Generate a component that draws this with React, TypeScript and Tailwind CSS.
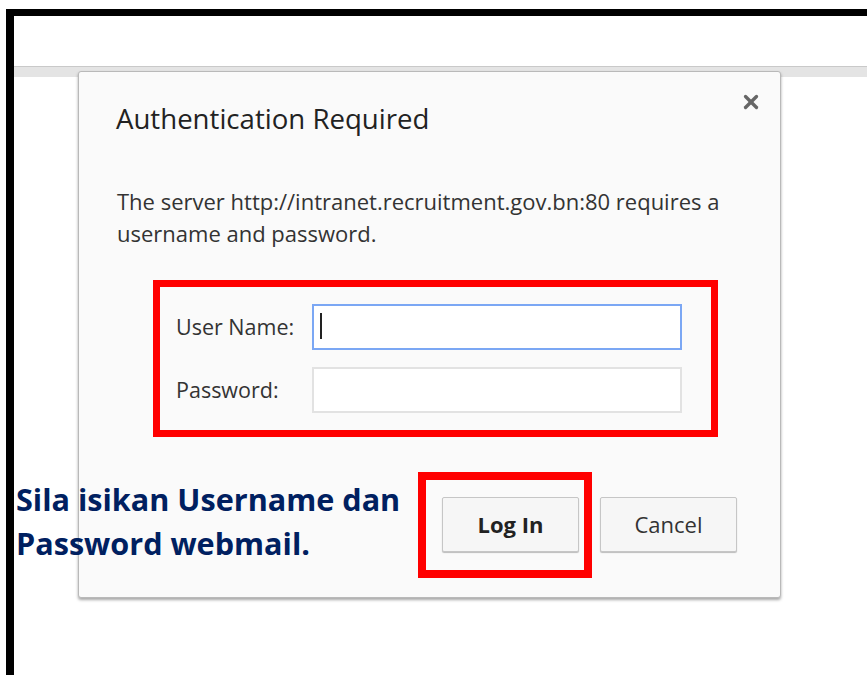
import { X } from "lucide-react";

const ui = { fontFamily: '"Open Sans", "Noto Sans", sans-serif' };

function Field({ label, focused }: { label: string; focused?: boolean }) {
  return (
    <div className="flex items-center">
      <span className="w-[136px] text-[21.5px] text-[#333]">{label}</span>
      <div
        className={`relative h-[46px] w-[370px] bg-white ${
          focused ? "border-2 border-[#7ba7f4]" : "border-2 border-[#e2e2e2]"
        }`}
      >
        {focused && <div className="absolute left-[6px] top-[7px] h-[26px] w-[2px] bg-[#222]" />}
      </div>
    </div>
  );
}

function AuthDialog() {
  return (
    <div
      className="absolute left-[78px] top-[71px] h-[527px] w-[703px] rounded-[3px] border border-[#b9b9b9] bg-[#fafafa] shadow-[0_2px_3px_rgba(0,0,0,0.35)]"
      style={ui}
    >
      <div className="flex items-start justify-between pl-[37px] pr-[18px] pt-[28px]">
        <h1 className="text-[27.6px] leading-[36px] text-[#222]">Authentication Required</h1>
        <X className="mt-[-9px] h-[22px] w-[22px] text-[#666]" strokeWidth={3.6} />
      </div>
      <p className="mt-[49px] w-[660px] pl-[38px] text-[22px] leading-[32px] text-[#333]">
        The server http://intranet.recruitment.gov.bn:80 requires a username and password.
      </p>

      <div className="ml-[74px] mt-[31px] flex w-[565px] flex-col gap-[17px] border-[7px] border-[#ff0000] pb-[17px] pl-[16px] pt-[17px]">
        <Field label="User Name:" focused />
        <Field label="Password:" />
      </div>

      <div className="ml-[339px] mt-[35px] flex items-start gap-[8px]">
        <div className="border-[8px] border-[#ff0000] pb-[18px] pl-[16px] pr-[5px] pt-[17px]">
          <button className="h-[55px] w-[137px] rounded-[2px] border border-[#c6c6c6] bg-[#f6f6f6] text-[22px] font-bold text-[#222] shadow-[0_1px_1px_rgba(0,0,0,0.25)]">
            Log In
          </button>
        </div>
        <button className="mt-[25px] h-[55px] w-[137px] rounded-[2px] border border-[#c6c6c6] bg-[#f6f6f6] text-[22px] text-[#333] shadow-[0_1px_1px_rgba(0,0,0,0.25)]">
          Cancel
        </button>
      </div>
    </div>
  );
}

export default function App() {
  return (
    <div className="relative h-[675px] w-[867px] overflow-hidden bg-white">
      <div className="h-[9px]" />
      <div className="ml-[6px] h-[666px] border-l-[8px] border-t-[7px] border-black">
        {/* browser chrome strip */}
        <div className="h-[50px] bg-white" />
        <div className="h-[11px] border-t border-[#c9c9c9] bg-[#e4e4e4]" />
        <div className="h-full bg-white" />
      </div>

      <AuthDialog />

      <p
        className="absolute left-[16px] top-[477px] text-[30.6px] font-bold leading-[44px] text-[#002060]"
        style={{ fontFamily: '"Open Sans", sans-serif' }}
      >
        Sila isikan Username dan
        <br />
        Password webmail.
      </p>
    </div>
  );
}
